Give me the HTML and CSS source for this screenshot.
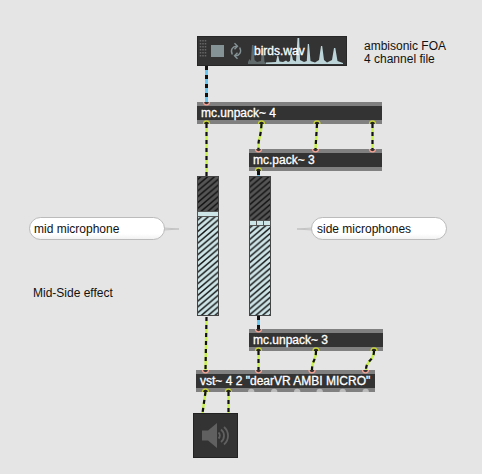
FILE: index.html
```html
<!DOCTYPE html>
<html lang="en">
<head>
<meta charset="utf-8">
<title>Mid-Side effect</title>
<link rel="stylesheet" href="styles.css">
</head>
<body>
<main class="patcher">
  <section class="player">
    <svg class="player-art" width="150" height="30" viewBox="0 0 150 30">
      <path class="grip" d="M3.500 4v17M6 4v17M8.500 4v17"/>
      <rect class="stop" x="14" y="9" width="13" height="12"/>
      <g class="loop"><path d="M35.300 18.500C33 14 35.500 10 40 10.200M42.700 11.500C45 16 42.500 20 38 19.800"/><path d="M37.500 7.200l3 3-3 3M40.500 16.800l-3 3 3 3"/></g>
      <path class="wave-played" d="M51 28V26L52.500 23 54 25 55 9H56.500L57.500 24 60 26 64 25 65 13H66.500L67.500 26 69 27V28z"/>
      <path class="wave" d="M69 28V26.500L79 26 80.300 20H81.300L82.500 25.500 86 26 89 24.500 91 26 93 25 93.600 18H94.600L96 24 99 25.500 100.500 2H102.200L103 24 107 26 109.800 25 110.800 8H112L113.500 25 118 26.500 122 24 124 10H125.200L127 24 130 26.500 135 24 137 12H138.300L140.500 25 146 27V28z"/>
    </svg>
    <span class="filename">birds.wav</span>
  </section>
  <p class="comment file-note">ambisonic FOA<br>4 channel file</p>
  <div class="box unpack-four">mc.unpack~ 4</div>
  <div class="box pack-three">mc.pack~ 3</div>
  <div class="box unpack-three">mc.unpack~ 3</div>
  <div class="box vst">vst~ 4 2 "dearVR AMBI MICRO"</div>
  <svg class="cords" width="482" height="474" viewBox="0 0 482 474">
    <defs>
      <pattern id="hatch" width="6.800" height="5.800" patternUnits="userSpaceOnUse"><path d="M-1.700 1.450L1.700-1.450M-1.700 7.250L8.500-1.450M5.100 7.250L8.500 4.350" stroke="#111" stroke-width="1.400"/></pattern>
    </defs>
    <g class="slider">
      <rect class="off" x="197.500" y="176.500" width="21" height="35"/>
      <rect class="on" x="197.500" y="216.500" width="21" height="99"/>
      <rect class="hatching" x="197.500" y="176.500" width="21" height="35"/>
      <rect class="hatching" x="197.500" y="216.500" width="21" height="99"/>
      <rect class="knob" x="197.500" y="211.500" width="21" height="5"/>
    </g>
    <g class="slider">
      <rect class="off" x="249.500" y="176.500" width="21" height="44"/>
      <rect class="on" x="249.500" y="225.500" width="21" height="90"/>
      <rect class="hatching" x="249.500" y="176.500" width="21" height="44"/>
      <rect class="hatching" x="249.500" y="225.500" width="21" height="90"/>
      <rect class="knob" x="249.500" y="220.500" width="21" height="5"/>
      <path class="split" d="M256.500 221v4M263.500 221v4"/>
    </g>
    <g class="multi"><path d="M206.500 66V102M258.500 171V176M258.500 316V329"/></g>
    <g class="multi-dash"><path d="M206.500 66V102M258.500 171V176M258.500 316V329"/></g>
    <g class="signal">
      <path d="M206.500 124V176M261.500 124Q261 133 259.500 138T258.500 149M317 124L315.500 149M372.500 124V149M206.500 317L205.500 370M258.500 351V370M316 351C316 361 312 360 312 370M374 351C374 361 366 360 366 370M205.500 392L202.500 413M228.500 392V413"/>
    </g>
    <g class="signal-dash">
      <path d="M206.500 124V176M261.500 124Q261 133 259.500 138T258.500 149M317 124L315.500 149M372.500 124V149M206.500 317L205.500 370M258.500 351V370M316 351C316 361 312 360 312 370M374 351C374 361 366 360 366 370M205.500 392L202.500 413M228.500 392V413"/>
    </g>
    <path class="inlet" d="M203.500 102a3 2.800 0 0 0 6 0M255.500 149a3 2.800 0 0 0 6 0M312.500 149a3 2.800 0 0 0 6 0M369.500 149a3 2.800 0 0 0 6 0M255.500 329a3 2.800 0 0 0 6 0M202.500 370a3 2.800 0 0 0 6 0M255.500 370a3 2.800 0 0 0 6 0M309 370a3 2.800 0 0 0 6 0M362.500 370a3 2.800 0 0 0 6 0"/>
    <path class="outlet" d="M203.500 124a3 3 0 0 1 6 0M258.500 124a3 3 0 0 1 6 0M314 124a3 3 0 0 1 6 0M369.500 124a3 3 0 0 1 6 0M255.500 171a3 3 0 0 1 6 0M255.500 351a3 3 0 0 1 6 0M313 351a3 3 0 0 1 6 0M371 351a3 3 0 0 1 6 0M202.500 392a3 3 0 0 1 6 0M225.500 392a3 3 0 0 1 6 0"/>
    <path class="free-outlet" d="M248 392a3.200 3.200 0 0 1 6.400 0zM271 392a3.200 3.200 0 0 1 6.400 0zM294 392a3.200 3.200 0 0 1 6.400 0zM316.500 392a3.200 3.200 0 0 1 6.400 0zM339.500 392a3.200 3.200 0 0 1 6.400 0zM362.500 392a3.200 3.200 0 0 1 6.400 0z"/>
    <path class="pointer" d="M164 228l15 1-15 1M312 228l-15 1 15 1"/>
  </svg>
  <p class="bubble mid">mid microphone</p>
  <p class="bubble side">side microphones</p>
  <p class="comment effect-note">Mid-Side effect</p>
  <div class="dac">
    <svg width="45" height="45" viewBox="0 0 45 45">
      <path class="cone" d="M9 17.500h6L24 10v25l-9-7.500H9z"/>
      <path class="sound" d="M25.500 19.500a4 4 0 0 1 0 6M28 16.500a8 8 0 0 1 0 12.500M31 14a11.500 11.500 0 0 1 0 17.500"/>
    </svg>
  </div>
</main>
</body>
</html>
```
FILE: styles.css
```css
body { margin: 0; background: #e5e5e5; font: 12px/13px "Liberation Sans", Arial, sans-serif; color: #111; }
p { margin: 0; }
.patcher { position: relative; width: 482px; height: 474px; overflow: hidden; }
.player, .comment, .box, .cords, .bubble, .dac { position: absolute; box-sizing: border-box; white-space: nowrap; }
.player { left: 197px; top: 36px; width: 150px; height: 30px; background: #333; box-shadow: inset 0 0 0 1px #272727; }
.player-art { display: block; }
.filename { position: absolute; left: 57px; top: 9px; color: #fff; -webkit-text-stroke: .3px #fff; }
.grip { stroke: #666; stroke-width: 1.5; stroke-dasharray: 1.5 1.5; }
.stop { fill: #869396; }
.loop { fill: none; stroke: #869396; stroke-width: 1.4; }
.wave-played { fill: #626b6c; }
.wave { fill: #bdd5d9; }
.box { height: 22px; padding: 1px 4px 0; border: solid #808080; border-width: 4px 0; background: #333; color: #fff; -webkit-text-stroke: .3px #fff; }
.unpack-four { left: 197px; top: 102px; width: 185px; }
.pack-three { left: 249px; top: 149px; width: 133px; }
.unpack-three { left: 249px; top: 329px; width: 134px; }
.vst { left: 196px; top: 370px; width: 179px; }
.cords { left: 0; top: 0; }
.off { fill: #555; }
.on { fill: #cee5e8; }
.hatching { fill: url(#hatch); stroke: #444; }
.knob { fill: #cee5e8; stroke: #555; }
.split { stroke: #555; }
.multi, .multi-dash, .signal, .signal-dash { fill: none; }
.multi { stroke: #68c8f5; stroke-width: 3; }
.multi-dash { stroke: #111; stroke-width: 3; stroke-dasharray: 4 5; }
.signal { stroke: #c8f04c; stroke-width: 2.5; }
.signal-dash { stroke: #111; stroke-width: 2.2; stroke-dasharray: 4 4; }
.inlet { fill: #333; stroke: #f4a294; stroke-width: 1.3; }
.outlet { fill: #222; stroke: #c4d038; stroke-width: 1.3; }
.free-outlet { fill: #bcbcbc; }
.pointer { fill: #ddd; stroke: #bbb; stroke-width: .8; }
.bubble { height: 23px; padding: 5px 4px; border: 1px solid #bbb; border-radius: 12px; background: linear-gradient(#fff 75%, #f2f2f2); }
.mid { left: 29px; top: 217px; width: 136px; }
.side { left: 311px; top: 217px; width: 136px; padding-left: 5px; }
.file-note { left: 364px; top: 40px; }
.effect-note { left: 33px; top: 287px; }
.dac { left: 193px; top: 413px; width: 45px; height: 45px; background: #333; box-shadow: inset 0 0 0 1px #222; }
.dac svg { display: block; }
.cone { fill: #606060; }
.sound { fill: none; stroke: #606060; stroke-width: 1.8; }
```
